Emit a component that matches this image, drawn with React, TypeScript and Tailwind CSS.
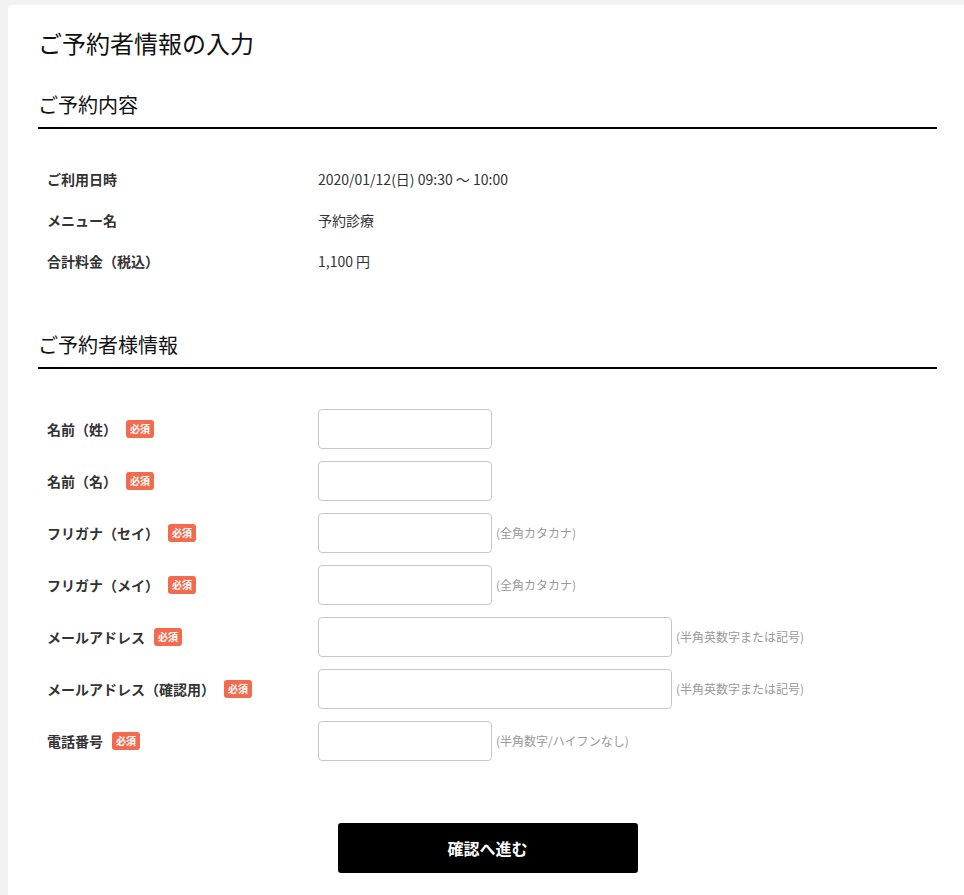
import React from "react";

const font = { fontFamily: '"Noto Sans CJK JP", "Noto Sans", sans-serif' };

function Badge() {
  return (
    <span className="ml-[9px] inline-flex h-[18px] w-[28px] items-center justify-center rounded-[3px] bg-[#f26b4f] text-[10px] font-bold leading-none text-white">
      必須
    </span>
  );
}

type Field = { label: string; wide?: boolean; hint?: string };

const fields: Field[] = [
  { label: "名前（姓）" },
  { label: "名前（名）" },
  { label: "フリガナ（セイ）", hint: "(全角カタカナ)" },
  { label: "フリガナ（メイ）", hint: "(全角カタカナ)" },
  { label: "メールアドレス", wide: true, hint: "(半角英数字または記号)" },
  { label: "メールアドレス（確認用）", wide: true, hint: "(半角英数字または記号)" },
  { label: "電話番号", hint: "(半角数字/ハイフンなし)" },
];

const summary = [
  { label: "ご利用日時", value: "2020/01/12(日) 09:30 ～ 10:00" },
  { label: "メニュー名", value: "予約診療" },
  { label: "合計料金（税込）", value: "1,100 円" },
];

export default function App() {
  return (
    <div className="min-h-screen bg-[#f2f2f2] pl-[8px] pt-[5px]" style={font}>
      <div className="rounded-tl-[4px] bg-white pb-[40px] pl-[30px] pr-[27px] pt-[23px]">
        <h1 className="text-[24px] font-normal leading-[30px] text-[#111]">ご予約者情報の入力</h1>

        <h2 className="mt-[32px] border-b-2 border-black pb-[7px] text-[20px] font-normal leading-[30px] text-[#111]">
          ご予約内容
        </h2>
        <div className="mt-[30px] flex flex-col">
          {summary.map((r) => (
            <div key={r.label} className="flex h-[41px] items-center text-[14px] text-[#333]">
              <div className="w-[280px] pl-[9px] font-bold">{r.label}</div>
              <div>{r.value}</div>
            </div>
          ))}
        </div>

        <h2 className="mt-[48px] border-b-2 border-black pb-[7px] text-[20px] font-normal leading-[30px] text-[#111]">
          ご予約者様情報
        </h2>
        <div className="mt-[40px] flex flex-col gap-[12px]">
          {fields.map((f) => (
            <div key={f.label} className="flex h-[40px] items-center">
              <div className="flex w-[280px] items-center pl-[9px] text-[14px] font-bold text-[#333]">
                <span>{f.label}</span>
                <Badge />
              </div>
              <input
                type="text"
                className={`h-[40px] rounded-[4px] border border-[#c8c8c8] bg-white px-2 text-[14px] outline-none ${
                  f.wide ? "w-[354px]" : "w-[174px]"
                }`}
              />
              {f.hint && <span className="ml-[4px] text-[12px] text-[#999]">{f.hint}</span>}
            </div>
          ))}
        </div>

        <div className="mt-[62px] flex justify-center">
          <button
            type="button"
            className="h-[50px] w-[300px] rounded-[3px] bg-black text-[16px] font-bold text-white"
          >
            確認へ進む
          </button>
        </div>
      </div>
    </div>
  );
}
